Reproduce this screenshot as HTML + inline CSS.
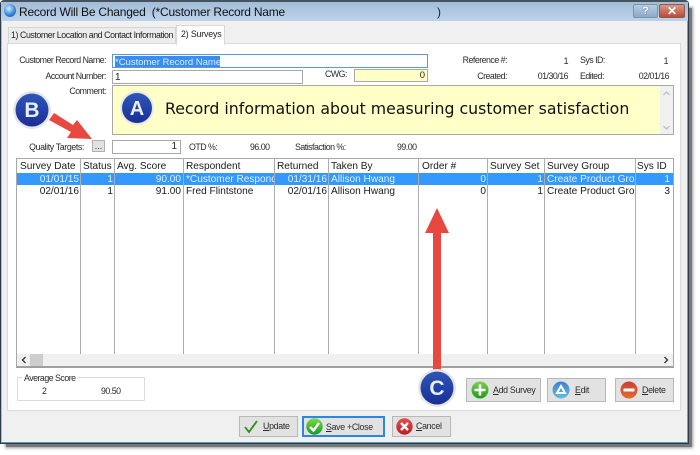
<!DOCTYPE html>
<html><head><meta charset="utf-8">
<style>
html,body{margin:0;padding:0;background:#fff;width:700px;height:455px;overflow:hidden}
*{box-sizing:border-box}
#r{position:relative;width:700px;height:455px;overflow:hidden;font-family:"Liberation Sans",sans-serif;color:#222;filter:blur(.35px)}
.a{position:absolute}
.t{position:absolute;font-size:8.8px;letter-spacing:-.5px;line-height:12px;white-space:nowrap;color:#2a2a2a}
.rt{text-align:right}
.g{position:absolute;font-size:10.1px;line-height:12px;white-space:nowrap;color:#1a1a1a}
.v{position:absolute;width:1px;top:158px;height:196px;background:#adadad}
.btn{position:absolute;background:#e2e2e2;border:1px solid #b8b8b8;font-size:8.8px;letter-spacing:-.3px;color:#2a2a2a;line-height:20px;white-space:nowrap}
u{text-decoration:underline}
</style></head><body>
<div id="r">
<!-- shadow -->
<div class="a" style="left:6px;top:8px;width:686px;height:439px;background:#777;box-shadow:0 0 3px 1px #999"></div>
<!-- window -->
<div class="a" style="left:0;top:0;width:689px;height:444px;background:#f0f0f0;border:1px solid #2b3b4b;border-top:2px solid #45525f;border-radius:4px 4px 0 0"></div>
<div class="a" style="left:1px;top:2px;width:687px;height:19px;background:linear-gradient(#a3bdd8,#bcd3ea)"></div>
<div class="a" style="left:1px;top:21px;width:1px;height:421px;background:#9cc4dc"></div>
<div class="a" style="left:687px;top:21px;width:1px;height:421px;background:#6aa7c4"></div>
<div class="a" style="left:1px;top:442px;width:687px;height:1px;background:#4f9cc5"></div>
<!-- icon -->
<div class="a" style="left:4px;top:4px;width:12px;height:13px;border-radius:50%;background:radial-gradient(circle at 40% 35%,#cfeeff,#2f7fd6 60%,#1a4aa0)"></div>
<div class="a" style="left:19px;top:4px;font-size:12px;letter-spacing:-.22px;line-height:17px;color:#111;white-space:pre">Record Will Be Changed  (*Customer Record Name</div>
<div class="a" style="left:437px;top:4px;font-size:12px;line-height:17px;color:#222">)</div>
<!-- help / close -->
<div class="a" style="left:633px;top:4px;width:25px;height:14px;border:1px solid #7d93a8;border-radius:2px;background:linear-gradient(#b6cde2,#8caac8);color:#fff;font:bold 11px/12px 'Liberation Sans',sans-serif;text-align:center;text-shadow:0 0 1px #334">?</div>
<div class="a" style="left:659px;top:4px;width:26px;height:14px;border:1px solid #8e5a4e;border-radius:2px;background:linear-gradient(#d89a8a,#bd4a36);color:#fff;font:bold 12px/12px 'Liberation Sans',sans-serif;text-align:center">✕</div>
<!-- tabs -->
<div class="a" style="left:8px;top:27px;width:168px;height:17px;background:#ececec;border:1px solid #d6d6d6"></div>
<div class="t" style="left:11px;top:29px;color:#222;font-size:8.8px;letter-spacing:-.42px">1) Customer Location and Contact Information</div>
<div class="a" style="left:7px;top:43px;width:674px;height:368px;background:#fff;border:1px solid #dadada"></div>
<div class="a" style="left:176px;top:25px;width:49px;height:20px;background:#fff;border:1px solid #d9d9d9;border-bottom:0"></div>
<div class="t" style="left:181px;top:28px;color:#222;letter-spacing:-.15px">2) Surveys</div>
<!-- form -->
<div class="t rt" style="left:0;width:106px;top:54px">Customer Record Name:</div>
<div class="a" style="left:112px;top:54px;width:316px;height:14px;border:1px solid #5a9bd5;background:#fff"></div>
<div class="a" style="left:115px;top:56px;width:105px;height:11px;background:#3a8df0"></div>
<div class="a" style="left:115px;top:56px;font-size:9.500px;line-height:13px;color:#d9ecff;white-space:nowrap">*Customer Record Name</div>
<div class="t rt" style="left:0;width:106px;top:70px">Account Number:</div>
<div class="a" style="left:112px;top:70px;width:191px;height:14px;border:1px solid #a8a8a8;background:#fff;font-size:10px;line-height:13px;padding-left:2px">1</div>
<div class="t" style="left:325px;top:68px">CWG:</div>
<div class="a" style="left:354px;top:69px;width:74px;height:13px;border:1px solid #a8a8a8;background:#ffffc8;font-size:9.500px;line-height:11px;text-align:right;padding-right:2px">0</div>
<div class="t rt" style="left:430px;width:77px;top:54px">Reference #:</div>
<div class="t rt" style="left:520px;width:48px;top:55px">1</div>
<div class="t" style="left:580px;top:54px">Sys ID:</div>
<div class="t rt" style="left:620px;width:48px;top:55px">1</div>
<div class="t rt" style="left:430px;width:77px;top:70px">Created:</div>
<div class="t rt" style="left:520px;width:48px;top:70px">01/30/16</div>
<div class="t" style="left:580px;top:70px">Edited:</div>
<div class="t rt" style="left:620px;width:49px;top:70px">02/01/16</div>
<div class="t rt" style="left:0;width:106px;top:85px">Comment:</div>
<div class="a" style="left:112px;top:85px;width:562px;height:50px;border:1px solid #a8a8a8;background:#ffffc8"></div>
<div class="a" style="left:660px;top:86px;width:13px;height:48px;background:#f0f0f0"></div>
<svg class="a" style="left:660px;top:86px" width="13" height="48"><path d="M3.500 9L6.500 6L9.500 9" fill="none" stroke="#b5b5b5"/><path d="M3.500 40L6.500 43L9.500 40" fill="none" stroke="#b5b5b5"/></svg>
<div class="a" style="left:165px;top:99px;font-family:'DejaVu Sans',sans-serif;font-size:15.750px;line-height:20px;color:#111;white-space:nowrap">Record information about measuring customer satisfaction</div>
<!-- quality -->
<div class="t rt" style="left:0;width:84px;top:141px;letter-spacing:-.38px">Quality Targets:</div>
<div class="a" style="left:92px;top:140px;width:13px;height:12px;background:#e2e2e2;border:1px solid #b0b0b0;font-size:9px;line-height:11px;text-align:center">...</div>
<div class="a" style="left:112px;top:140px;width:69px;height:14px;border:1px solid #a8a8a8;background:#fff;font-size:10px;line-height:12px;text-align:right;padding-right:3px">1</div>
<div class="t" style="left:189px;top:141px">OTD %:</div>
<div class="t" style="left:250px;top:141px">96.00</div>
<div class="t" style="left:295px;top:141px">Satisfaction %:</div>
<div class="t" style="left:397px;top:141px">99.00</div>
<!-- grid -->
<div class="a" style="left:16px;top:158px;width:658px;height:210px;border:1px solid #a8a8a8;border-bottom:2px solid #a0a0a0;background:#fff"></div>
<div class="a" style="left:17px;top:173px;width:656px;height:12px;background:#3399ff"></div>
<div class="a" style="left:17px;top:354px;width:656px;height:12px;background:#f0f0f0"></div>
<div class="a" style="left:30px;top:354px;width:13px;height:12px;background:#cdcdcd"></div>
<svg class="a" style="left:20px;top:356px" width="8" height="8"><path d="M5.500 1L2.500 4L5.500 7" fill="none" stroke="#333" stroke-width="1.300"/></svg>
<svg class="a" style="left:662px;top:356px" width="8" height="8"><path d="M2.500 1L5.500 4L2.500 7" fill="none" stroke="#333" stroke-width="1.300"/></svg>
<div class="v" style="left:80px"></div><div class="v" style="left:114px"></div><div class="v" style="left:183px"></div><div class="v" style="left:274px"></div><div class="v" style="left:328px"></div><div class="v" style="left:418px"></div><div class="v" style="left:487px"></div><div class="v" style="left:544px"></div><div class="v" style="left:635px"></div>
<div class="g" style="left:20px;top:161px">Survey Date</div>
<div class="g" style="left:83px;top:161px">Status</div>
<div class="g" style="left:117px;top:161px">Avg. Score</div>
<div class="g" style="left:186px;top:161px">Respondent</div>
<div class="g" style="left:277px;top:161px">Returned</div>
<div class="g" style="left:331px;top:161px">Taken By</div>
<div class="g" style="left:422px;top:161px">Order #</div>
<div class="g" style="left:490px;top:161px">Survey Set</div>
<div class="g" style="left:547px;top:161px">Survey Group</div>
<div class="g" style="left:637px;top:161px">Sys ID</div>
<!-- row 1 -->
<div class="g rt" style="left:20px;width:59px;top:174px;color:#dff0ff">01/01/15</div>
<div class="g rt" style="left:85px;width:28px;top:174px;color:#dff0ff">1</div>
<div class="g rt" style="left:120px;width:61px;top:174px;color:#dff0ff">90.00</div>
<div class="g" style="left:186px;width:88px;overflow:hidden;top:174px;color:#dff0ff">*Customer Respondent</div>
<div class="g rt" style="left:280px;width:47px;top:174px;color:#dff0ff">01/31/16</div>
<div class="g" style="left:331px;top:174px;color:#dff0ff">Allison Hwang</div>
<div class="g rt" style="left:430px;width:56px;top:174px;color:#dff0ff">0</div>
<div class="g rt" style="left:490px;width:53px;top:174px;color:#dff0ff">1</div>
<div class="g" style="left:547px;width:88px;overflow:hidden;top:174px;color:#dff0ff">Create Product Group</div>
<div class="g rt" style="left:640px;width:30px;top:174px;color:#dff0ff">1</div>
<!-- row 2 -->
<div class="g rt" style="left:20px;width:59px;top:186px">02/01/16</div>
<div class="g rt" style="left:85px;width:28px;top:186px">1</div>
<div class="g rt" style="left:120px;width:61px;top:186px">91.00</div>
<div class="g" style="left:186px;top:186px">Fred Flintstone</div>
<div class="g rt" style="left:280px;width:47px;top:186px">02/01/16</div>
<div class="g" style="left:331px;top:186px">Allison Hwang</div>
<div class="g rt" style="left:430px;width:56px;top:186px">0</div>
<div class="g rt" style="left:490px;width:53px;top:186px">1</div>
<div class="g" style="left:547px;width:88px;overflow:hidden;top:186px">Create Product Group</div>
<div class="g rt" style="left:640px;width:30px;top:186px">3</div>
<!-- average -->
<div class="a" style="left:17px;top:377px;width:128px;height:24px;border:1px solid #dcdcdc"></div>
<div class="t" style="left:23px;top:372px;background:#fff;padding:0 1px">Average Score</div>
<div class="t" style="left:42px;top:385px">2</div>
<div class="t" style="left:101px;top:385px">90.50</div>
<!-- buttons -->
<div class="btn" style="left:466px;top:378px;width:75px;height:24px;padding-left:26px;line-height:22px"><u>A</u>dd Survey</div>
<svg class="a" style="left:471px;top:381px" width="18" height="18"><defs><linearGradient id="gg" x1="0" y1="0" x2="0" y2="1"><stop offset="0" stop-color="#7ed04b"/><stop offset="1" stop-color="#1d9a1d"/></linearGradient></defs><circle cx="9" cy="9" r="8.500" fill="url(#gg)"/><path d="M9 3.500V14.500M3.500 9H14.500" stroke="#fff" stroke-width="2.600"/></svg>
<div class="btn" style="left:547px;top:378px;width:59px;height:24px;padding-left:27px;line-height:22px"><u>E</u>dit</div>
<svg class="a" style="left:552px;top:381px" width="18" height="18"><defs><linearGradient id="gb" x1="0" y1="0" x2="0" y2="1"><stop offset="0" stop-color="#3f7fd0"/><stop offset="1" stop-color="#66bde0"/></linearGradient></defs><circle cx="9" cy="9" r="8.500" fill="url(#gb)"/><path d="M9 5L13 12H5Z" fill="none" stroke="#fff" stroke-width="2"/></svg>
<div class="btn" style="left:615px;top:378px;width:59px;height:24px;padding-left:26px;line-height:22px"><u>D</u>elete</div>
<svg class="a" style="left:620px;top:381px" width="18" height="18"><defs><linearGradient id="gr" x1="0" y1="0" x2="0" y2="1"><stop offset="0" stop-color="#c9413a"/><stop offset="1" stop-color="#e36a2c"/></linearGradient></defs><circle cx="9" cy="9" r="8.500" fill="url(#gr)"/><path d="M3.500 9H14.500" stroke="#fff" stroke-width="3"/></svg>
<div class="btn" style="left:239px;top:416px;width:59px;height:21px;padding-left:23px;line-height:19px"><u>U</u>pdate</div>
<svg class="a" style="left:243px;top:418px" width="16" height="16"><path d="M2 9L6 14L14 3" fill="none" stroke="#2f8a1e" stroke-width="1.800"/></svg>
<div class="btn" style="left:302px;top:416px;width:83px;height:21px;padding-left:22px;line-height:18px;border:2px solid #2f86e0"><u>S</u>ave +Close</div>
<svg class="a" style="left:306px;top:418px" width="17" height="17"><defs><linearGradient id="gs" x1="0" y1="0" x2="0" y2="1"><stop offset="0" stop-color="#7edc45"/><stop offset="1" stop-color="#129a22"/></linearGradient></defs><circle cx="8.500" cy="8.500" r="8.200" fill="url(#gs)"/><path d="M4 9L7.500 12.500L13 5" fill="none" stroke="#fff" stroke-width="2.400"/></svg>
<div class="btn" style="left:392px;top:416px;width:59px;height:21px;padding-left:23px;line-height:19px"><u>C</u>ancel</div>
<svg class="a" style="left:396px;top:418px" width="17" height="17"><defs><linearGradient id="gc" x1="0" y1="0" x2="0" y2="1"><stop offset="0" stop-color="#e2504e"/><stop offset="1" stop-color="#b81c22"/></linearGradient></defs><circle cx="8.500" cy="8.500" r="8.200" fill="url(#gc)"/><path d="M5 5L12 12M12 5L5 12" stroke="#fff" stroke-width="2.400"/></svg>
<!-- annotations -->
<svg class="a" style="left:0;top:0" width="700" height="455">
<defs><linearGradient id="bl" x1="0" y1="0" x2="0" y2="1"><stop offset="0" stop-color="#2d56b8"/><stop offset="1" stop-color="#1a2f96"/></linearGradient></defs>
<path d="M54 113L73 125L77 120L92 139L67 138L71 132L49 120Z" fill="#e8483f"/>
<path d="M437 208L449 233H441V370H433V233H425Z" fill="#e8483f"/>
<circle cx="32" cy="110" r="19" fill="#e6e6e6"/><circle cx="32" cy="110" r="16.500" fill="url(#bl)"/>
<circle cx="137" cy="108" r="17" fill="#e6e6e6"/><circle cx="137" cy="108" r="15" fill="url(#bl)"/>
<circle cx="437" cy="388" r="19" fill="#e6e6e6"/><circle cx="437" cy="388" r="16.500" fill="url(#bl)"/>
<text x="32" y="117" font-family="Liberation Sans,sans-serif" font-weight="bold" font-size="21" fill="#e8eefc" text-anchor="middle">B</text>
<text x="137" y="115" font-family="Liberation Sans,sans-serif" font-weight="bold" font-size="20" fill="#e8eefc" text-anchor="middle">A</text>
<text x="437" y="395" font-family="Liberation Sans,sans-serif" font-weight="bold" font-size="21" fill="#e8eefc" text-anchor="middle">C</text>
</svg>
</div>
</body></html>
